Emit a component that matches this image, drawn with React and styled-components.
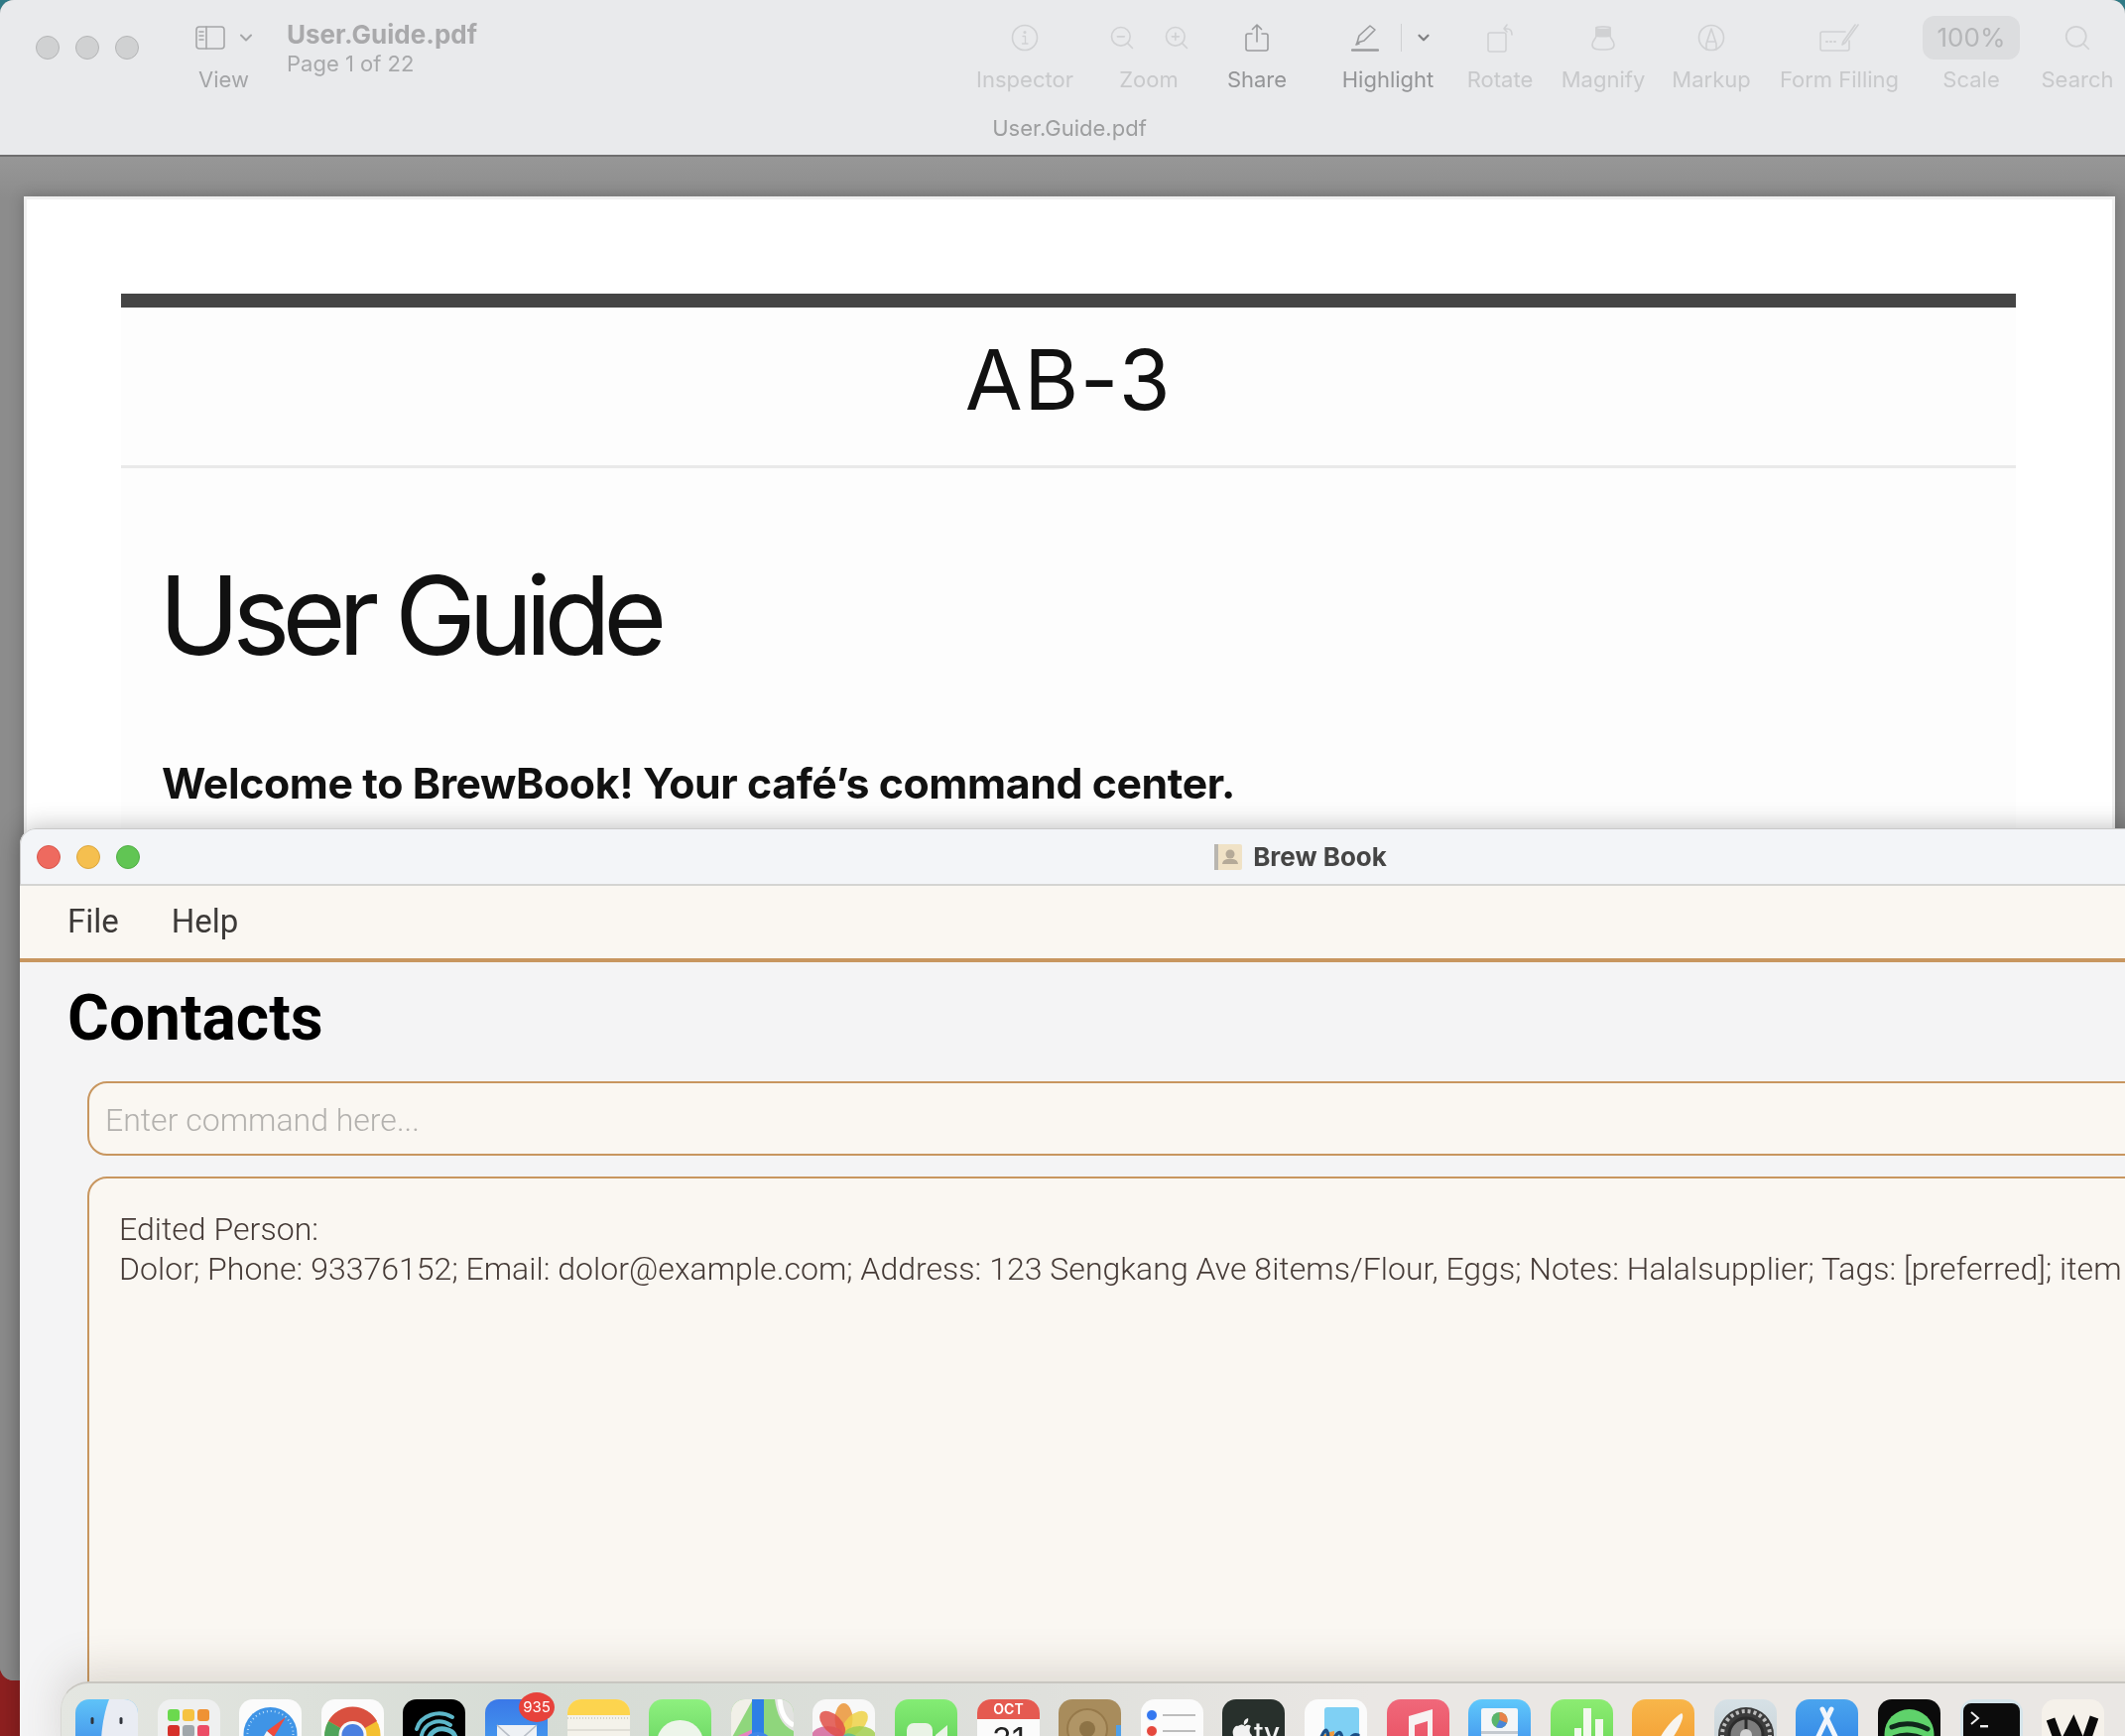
import React from 'react'
import styled, { createGlobalStyle } from 'styled-components'
import { ChevronDown, Search, ZoomIn, ZoomOut } from 'lucide-react'

const GlobalStyle = createGlobalStyle`
  html, body {
    margin: 0;
    padding: 0;
    width: 2142px;
    height: 1750px;
    overflow: hidden;
    background: #8f2020;
  }
  * { box-sizing: border-box; }
`

const Desktop = styled.div`
  position: relative;
  width: 2142px;
  height: 1750px;
  overflow: hidden;
  background: linear-gradient(180deg, #2f7a86 0 40%, #8f2020 90%);
  font-family: Inter, "Liberation Sans", sans-serif;
`

/* ---------- preview window ---------- */

const PreviewWindow = styled.div`
  display: flex;
  flex-direction: column;
  height: 1694px;
  background: #959595;
  border-radius: 14px;
  overflow: hidden;
`

const Toolbar = styled.div`
  flex: none;
  height: 158px;
  background: #e9eaec;
  border-bottom: 2px solid #6f6f6f;
`

const ToolRow = styled.div`
  display: flex;
  height: 116px;
  padding: 0 12px 0 36px;
`

const Lights = styled.div`
  display: flex;
  gap: 16px;
  padding-top: ${({ $top }) => $top || 0}px;
`

const Light = styled.span`
  display: block;
  width: 24px;
  height: 24px;
  border-radius: 50%;
  background: ${({ $color }) => $color};
  border: 1px solid ${({ $edge }) => $edge};
`

const ViewItem = styled.div`
  margin-left: 57px;
  width: 72px;
  display: flex;
  flex-direction: column;
  padding-top: 24px;
  height: 100%;
`

const ViewIcons = styled.div`
  display: flex;
  align-items: center;
  gap: 11px;
  height: 28px;
  color: #a5a6a8;
`

const ViewLabel = styled.div`
  margin-top: 14px;
  font-size: 22px;
  line-height: 28px;
  color: #a4a5a7;
  padding-left: 3px;
`

const DocInfo = styled.div`
  margin-left: 20px;
  padding-top: 19px;
`

const DocName = styled.div`
  font-size: 26px;
  line-height: 32px;
  font-weight: 700;
  color: #a9a9ab;
`

const DocPage = styled.div`
  font-size: 22px;
  line-height: 28px;
  color: #a8a9ab;
  margin-top: -1px;
`

const Tools = styled.div`
  display: flex;
  margin-left: auto;
  padding-top: 16px;
`

const Tool = styled.div`
  width: ${({ $w }) => $w}px;
  margin-left: ${({ $ml }) => $ml || 0}px;
  display: flex;
  flex-direction: column;
  align-items: center;
  color: ${({ $on }) => ($on ? '#9a9b9d' : '#d0d1d3')};
`

const ToolIcons = styled.div`
  height: 44px;
  display: flex;
  align-items: center;
  justify-content: center;
  gap: ${({ $gap }) => $gap || 0}px;
  padding-left: ${({ $pad }) => $pad || 0}px;
`

const ToolLabel = styled.div`
  margin-top: 6px;
  font-size: 22px;
  line-height: 28px;
  white-space: nowrap;
  color: ${({ $on }) => ($on ? '#949597' : '#c8c9cb')};
`

const ScaleBox = styled.div`
  width: 98px;
  height: 44px;
  border-radius: 12px;
  background: #dcdddf;
  color: #b5b6b8;
  font-size: 26px;
  line-height: 44px;
  text-align: center;
`

const Divider = styled.span`
  display: block;
  width: 1px;
  height: 28px;
  background: #cfd0d2;
  margin: 0 13px 0 22px;
`

const Caption = styled.div`
  height: 26px;
  padding-left: 14px;
  text-align: center;
  font-size: 22px;
  line-height: 26px;
  color: #9d9e9f;
`

const Canvas = styled.div`
  flex: 1;
  min-height: 0;
  display: flex;
  padding: 40px 10px 0 24px;
  background: linear-gradient(180deg, #979797 0, #8c8c8c 42px, #8c8c8c 100%);
`

const Page = styled.div`
  flex: 1;
  background: #fff;
  border: 3px solid #f0f0f0;
  border-bottom: 0;
  padding: 95px 97px 0 95px;
  box-shadow: 0 0 14px rgba(0, 0, 0, 0.22);
`

const PageBody = styled.div`
  height: 100%;
  background: #fdfdfd;
  border-top: 14px solid #454545;
`

const Header = styled.div`
  height: 162px;
  border-bottom: 3px solid #e9e9e9;
  text-align: center;
  font-size: 84px;
  line-height: 146px;
  font-weight: 400;
  color: #111;
  letter-spacing: 1.5px;
`

const GuideTitle = styled.h1`
  margin: 83px 0 0 38px;
  font-size: 110px;
  line-height: 130px;
  font-weight: 400;
  letter-spacing: -7.7px;
  color: #111;
`

const Welcome = styled.p`
  margin: 80px 0 0 41px;
  font-size: 42.8px;
  line-height: 50px;
  font-weight: 700;
  color: #111;
  letter-spacing: -0.4px;
`

/* ---------- brew book window ---------- */

const BrewWindow = styled.div`
  position: absolute;
  left: 20px;
  top: 835px;
  width: 2582px;
  height: 1100px;
  background: #f4f4f5;
  border-radius: 16px 16px 0 0;
  box-shadow: 0 0 26px rgba(0, 0, 0, 0.28);
  font-family: Roboto, "Liberation Sans", sans-serif;
  overflow: hidden;
`

const TitleBar = styled.div`
  display: grid;
  grid-template-columns: 1fr auto 1fr;
  align-items: center;
  height: 58px;
  padding: 0 16px;
  background: #f3f5f8;
  border: 1px solid #c9c9c9;
  border-bottom: 2px solid #d4d4d2;
  border-radius: 16px 16px 0 0;
`

const TitleText = styled.div`
  display: flex;
  align-items: center;
  gap: 11px;
  font-family: Inter, "Liberation Sans", sans-serif;
  font-size: 26px;
  font-weight: 700;
  color: #454545;
`

const MenuBar = styled.div`
  display: flex;
  gap: 53px;
  height: 77px;
  padding: 12px 0 0 48px;
  background: #faf7f2;
  border-bottom: 4px solid #c8965f;
`

const MenuItem = styled.span`
  font-size: 33px;
  line-height: 48px;
  color: #3d3a38;
`

const SectionTitle = styled.h2`
  margin: 19px 0 0 48px;
  font-size: 64px;
  line-height: 76px;
  font-weight: 700;
  color: #000;
`

const CommandBox = styled.div`
  margin: 25px 0 0 68px;
  height: 75px;
  padding-left: 16px;
  background: #faf7f2;
  border: 2px solid #c8965f;
  border-radius: 20px;
  font-size: 32px;
  line-height: 75px;
  font-weight: 300;
  color: #b3b1ae;
`

const ResultBox = styled.div`
  margin: 21px 0 0 68px;
  height: 700px;
  padding: 31px 30px;
  background: #faf7f2;
  border: 2px solid #c8965f;
  border-radius: 20px;
  font-size: 32px;
  line-height: 40px;
  font-weight: 300;
  color: #453a36;
  letter-spacing: 0.03px;
`

const ResultLine = styled.div`
  white-space: nowrap;
`

/* ---------- dock ---------- */

const Dock = styled.div`
  position: absolute;
  left: 61px;
  top: 1695px;
  width: 2200px;
  height: 90px;
  display: flex;
  gap: 19.6px;
  padding: 16px 0 0 14px;
  background: linear-gradient(90deg, #e4e6e1 0, #d6dcd5 22%, #dfe0dc 45%, #eae7e4 60%, #eae7e4 100%);
  border-top: 2px solid #c8c6c0;
  border-left: 1px solid #d8d8d4;
  border-radius: 28px 0 0 0;
  box-shadow: 0 -14px 40px rgba(90, 80, 60, 0.17);
`

const DockIcon = styled.div`
  position: relative;
  flex: none;
  width: 63px;
  height: 63px;
`

const IconFace = styled.div`
  width: 63px;
  height: 63px;
  border-radius: 14px;
  overflow: hidden;
  background: ${({ $bg }) => $bg};

  svg {
    display: block;
  }
`

const Badge = styled.span`
  position: absolute;
  top: -7px;
  right: -7px;
  width: 36px;
  height: 30px;
  border-radius: 50%;
  background: #e7423b;
  color: #fff;
  font-size: 15px;
  line-height: 30px;
  text-align: center;
  font-family: Inter, "Liberation Sans", sans-serif;
`

const Svg = ({ children }) => (
  <svg width='63' height='63' viewBox='0 0 63 63'>
    {children}
  </svg>
)

const LineIcon = ({ w = 28, h = 28, box, children }) => (
  <svg
    width={w}
    height={h}
    viewBox={box || `0 0 ${w} ${h}`}
    fill='none'
    stroke='currentColor'
    strokeWidth='1.6'
    strokeLinecap='round'
    strokeLinejoin='round'
  >
    {children}
  </svg>
)

const launchpadDots = [
  [10, 10, '#6bd94e'],
  [25, 10, '#f6c241'],
  [40, 10, '#ef9234'],
  [10, 26, '#d6302a'],
  [25, 26, '#a0a6aa'],
  [40, 26, '#ec4d66'],
]

const dockApps = [
  {
    name: 'Finder',
    bg: 'linear-gradient(180deg,#5fc3f8,#3b84e6)',
    art: (
      <Svg>
        <path d='M34 0 H63 V63 H27 C24 45 27 18 34 0 Z' fill='#e9ecf3' />
        <rect x='15.5' y='18' width='3' height='7' rx='1.5' fill='#30343c' />
        <rect x='44.5' y='18' width='3' height='7' rx='1.5' fill='#30343c' />
      </Svg>
    ),
  },
  {
    name: 'Launchpad',
    bg: '#eff0f0',
    art: (
      <Svg>
        {launchpadDots.map(([x, y, c]) => (
          <rect key={c} x={x} y={y} width='12' height='12' rx='3' fill={c} />
        ))}
      </Svg>
    ),
  },
  {
    name: 'Safari',
    bg: '#fbfbfb',
    art: (
      <Svg>
        <circle cx='31.5' cy='35' r='27' fill='#3f94e6' />
        <circle cx='31.5' cy='35' r='23' fill='none' stroke='#bfe0fa' strokeWidth='2' strokeDasharray='1 3' />
        <path d='M47 18 L28 32 L35 38 Z' fill='#ef4a3c' />
        <path d='M16 52 L28 32 L35 38 Z' fill='#f4f4f4' />
      </Svg>
    ),
  },
  {
    name: 'Chrome',
    bg: '#fbfbfb',
    art: (
      <Svg>
        <circle cx='31.5' cy='36' r='28' fill='#f4c030' />
        <path d='M31.5 36 L7 22 A28 28 0 0 1 56 22 Z' fill='#d9503f' />
        <path d='M31.5 36 L7 22 A28 28 0 0 0 20 62 Z' fill='#4fa45b' />
        <circle cx='31.5' cy='36' r='14' fill='#f7f7f7' />
        <circle cx='31.5' cy='36' r='11' fill='#4a7fe0' />
      </Svg>
    ),
  },
  {
    name: 'Waves',
    bg: '#000',
    art: (
      <Svg>
        <g fill='none' stroke='#5db7c9' strokeLinecap='round'>
          <path d='M14 30 C18 16 36 10 50 18' strokeWidth='4' />
          <path d='M19 36 C22 24 36 18 48 26' strokeWidth='4' />
          <path d='M25 60 C20 44 28 28 42 30 C48 31 52 34 53 38' strokeWidth='5' />
          <path d='M36 58 C32 48 34 40 42 40' strokeWidth='5' />
        </g>
      </Svg>
    ),
  },
  {
    name: 'Mail',
    bg: 'linear-gradient(180deg,#3a78e8,#49a6f0)',
    badge: '935',
    art: (
      <Svg>
        <path d='M12 26 H52 V63 H12 Z' fill='#eef1f4' />
        <path d='M12 26 L32 44 L52 26' fill='none' stroke='#b8bec6' strokeWidth='1.6' />
      </Svg>
    ),
  },
  {
    name: 'Notes',
    bg: '#f4f2ea',
    art: (
      <Svg>
        <rect width='63' height='16' fill='#fdd44e' />
        <line x1='0' y1='19' x2='63' y2='19' stroke='#c9c7bd' strokeWidth='1.5' strokeDasharray='1 2' />
        <line x1='0' y1='31' x2='63' y2='31' stroke='#e0ded6' strokeWidth='2' />
        <line x1='0' y1='45' x2='63' y2='45' stroke='#e0ded6' strokeWidth='2' />
      </Svg>
    ),
  },
  {
    name: 'Messages',
    bg: 'linear-gradient(180deg,#8ef07f,#62d05c)',
    art: (
      <Svg>
        <ellipse cx='31.5' cy='42' rx='23' ry='21' fill='#edf5ea' />
      </Svg>
    ),
  },
  {
    name: 'Maps',
    bg: '#8fd67c',
    art: (
      <Svg>
        <path d='M0 0 H22 L0 40 Z' fill='#f1f0e8' />
        <path d='M44 0 H63 V32 C50 26 46 14 44 0 Z' fill='#e2e3e0' />
        <path d='M0 40 L22 30 L22 63 H0 Z' fill='#e583c0' />
        <rect x='21' y='0' width='12' height='63' fill='#2d7fe6' />
        <path d='M49 0 C50 14 54 22 63 26' stroke='#fff' strokeWidth='5' fill='none' />
        <circle cx='27' cy='48' r='15' fill='#3d86e8' />
        <path d='M27 36 L36 60 L27 55 L18 60 Z' fill='#fff' />
      </Svg>
    ),
  },
  {
    name: 'Photos',
    bg: '#f8f8f8',
    art: (
      <Svg>
        <g style={{ mixBlendMode: 'multiply' }} transform='translate(31.5 36)'>
          {['#f29a38', '#f6d84a', '#a8d552', '#62c49a', '#6a9fe0', '#9a78c8', '#d96aa0', '#e8524a'].map((c, i) => (
            <ellipse key={c} cx='0' cy='-16' rx='9' ry='16' fill={c} opacity='0.85' transform={`rotate(${i * 45})`} />
          ))}
        </g>
      </Svg>
    ),
  },
  {
    name: 'FaceTime',
    bg: 'linear-gradient(180deg,#84ec74,#5dcc55)',
    art: (
      <Svg>
        <rect x='12' y='24' width='26' height='28' rx='7' fill='#eaf3e6' />
        <path d='M41 36 L53 26 V52 L41 44 Z' fill='#eaf3e6' />
      </Svg>
    ),
  },
  {
    name: 'Calendar',
    bg: '#fbfbfb',
    art: (
      <Svg>
        <rect width='63' height='20' fill='#e55a50' />
        <text x='31.5' y='15' textAnchor='middle' fontSize='14' fontWeight='600' fill='#fff' fontFamily='Inter, sans-serif'>OCT</text>
        <text x='31.5' y='52' textAnchor='middle' fontSize='32' fill='#222' fontFamily='Inter, sans-serif'>31</text>
      </Svg>
    ),
  },
  {
    name: 'Contacts',
    bg: '#a88c5c',
    art: (
      <Svg>
        <rect x='58' y='26' width='5' height='30' fill='#4f9fe8' />
        <circle cx='29' cy='30' r='20' fill='#b09566' stroke='#96794a' strokeWidth='2' />
        <circle cx='29' cy='30' r='8' fill='#8d7346' />
      </Svg>
    ),
  },
  {
    name: 'Reminders',
    bg: '#fbfbfb',
    art: (
      <Svg>
        <circle cx='11' cy='16' r='5.5' fill='#3478f0' stroke='#fff' strokeWidth='1' />
        <circle cx='11' cy='32' r='5.5' fill='#e5483d' stroke='#fff' strokeWidth='1' />
        <rect x='22' y='15' width='33' height='2' fill='#bdbdbd' />
        <rect x='22' y='31' width='33' height='2' fill='#bdbdbd' />
      </Svg>
    ),
  },
  {
    name: 'TV',
    bg: '#28302c',
    art: (
      <Svg>
        <path d='M16 27 C19 25 21 25 23 27 C25 25 27 26 29 27 C27 30 27 34 30 36 C29 40 26 46 23 44 C21 43 20 43 18 44 C15 46 9 36 11 31 C12 28 14 26 16 27 Z M22 26 C21 22 23 20 26 19 C27 22 25 25 22 26 Z' fill='#f1f1f1' />
        <text x='32' y='44' fontSize='28' fontWeight='500' fill='#f1f1f1' fontFamily='Inter, sans-serif'>tv</text>
      </Svg>
    ),
  },
  {
    name: 'Freeform',
    bg: '#fbfbfb',
    art: (
      <Svg>
        <rect x='20' y='8' width='35' height='42' rx='3' fill='#7fd0f4' />
        <path d='M8 63 C8 44 16 34 30 32 V63 Z' fill='#f09a3e' />
        <path d='M12 52 C20 26 24 26 24 44 C24 54 32 30 36 34 C40 38 36 50 42 44 C46 40 48 34 54 36' fill='none' stroke='#1c4f86' strokeWidth='3.4' strokeLinecap='round' />
      </Svg>
    ),
  },
  {
    name: 'Music',
    bg: 'linear-gradient(180deg,#f0687a,#e84c5e)',
    art: (
      <Svg>
        <path d='M22 17 L46 10 V56 H41 V22 L28 26 V60 H22 Z' fill='#f7f2f2' />
      </Svg>
    ),
  },
  {
    name: 'Keynote',
    bg: 'linear-gradient(180deg,#5fc8fb,#3b86ea)',
    art: (
      <Svg>
        <rect x='13' y='9' width='37' height='29' rx='2' fill='#f4f6f8' />
        <rect x='13' y='32' width='37' height='3' fill='#c4c9cf' />
        <circle cx='31.5' cy='21' r='8' fill='#5ab56c' />
        <path d='M31.5 21 V13 A8 8 0 0 1 39 24 Z' fill='#e8824a' />
        <path d='M31.5 21 L39 24 A8 8 0 0 1 28 28 Z' fill='#4a86d8' />
        <rect x='30.5' y='38' width='2' height='25' fill='#f4f6f8' />
      </Svg>
    ),
  },
  {
    name: 'Numbers',
    bg: 'linear-gradient(180deg,#8cec72,#66d452)',
    art: (
      <Svg>
        <rect x='24' y='29' width='7' height='34' fill='#f2f8ee' />
        <rect x='33' y='9' width='8' height='54' fill='#f2f8ee' />
        <rect x='45' y='20' width='8' height='43' fill='#f2f8ee' />
      </Svg>
    ),
  },
  {
    name: 'Pages',
    bg: 'linear-gradient(180deg,#f8b64a,#f29a30)',
    art: (
      <Svg>
        <path d='M50 14 C54 16 48 30 36 46 L24 63 H18 C22 48 34 24 50 14 Z' fill='#f8f4ee' />
      </Svg>
    ),
  },
  {
    name: 'Settings',
    bg: 'linear-gradient(180deg,#d6e1e6,#c6ced2)',
    art: (
      <Svg>
        <circle cx='32' cy='36' r='28' fill='#3c3c3c' />
        <circle cx='32' cy='36' r='24' fill='none' stroke='#bdbdbd' strokeWidth='4' strokeDasharray='3 3' />
        <circle cx='32' cy='36' r='17' fill='#7d7d7d' stroke='#2c2c2c' strokeWidth='3' />
        <g stroke='#2c2c2c' strokeWidth='3'>
          <line x1='32' y1='36' x2='32' y2='20' />
          <line x1='32' y1='36' x2='17' y2='45' />
          <line x1='32' y1='36' x2='47' y2='45' />
        </g>
        <circle cx='32' cy='36' r='6' fill='#d0d0d0' />
      </Svg>
    ),
  },
  {
    name: 'App Store',
    bg: 'linear-gradient(180deg,#4aa4ee,#2d7fe4)',
    art: (
      <Svg>
        <g stroke='#f2f6fb' strokeWidth='5' strokeLinecap='round'>
          <line x1='27' y1='10' x2='46' y2='50' />
          <line x1='36' y1='10' x2='17' y2='50' />
          <line x1='9' y1='46' x2='54' y2='46' />
        </g>
      </Svg>
    ),
  },
  {
    name: 'Spotify',
    bg: '#0b0b0b',
    art: (
      <Svg>
        <circle cx='31.5' cy='35' r='25' fill='#5fd26b' />
        <g fill='none' stroke='#10261a' strokeLinecap='round'>
          <path d='M14 28 C26 23 38 24 50 30' strokeWidth='5' />
          <path d='M16 38 C26 34 38 35 47 40' strokeWidth='4' />
          <path d='M19 47 C27 44 36 45 43 49' strokeWidth='3' />
        </g>
      </Svg>
    ),
  },
  {
    name: 'Terminal',
    bg: '#d4e4ea',
    art: (
      <Svg>
        <rect x='3' y='4' width='57' height='59' rx='8' fill='#0c0c0c' />
        <path d='M11 13 L18 19 L11 25' fill='none' stroke='#eee' strokeWidth='2' />
        <rect x='20' y='26' width='8' height='2.4' fill='#eee' />
      </Svg>
    ),
  },
  {
    name: 'Writer',
    bg: '#f5f1ea',
    art: (
      <Svg>
        <path d='M9 20 L20 50 L32 26 L42 50 L53 18' fill='none' stroke='#0a0a0a' strokeWidth='9' />
      </Svg>
    ),
  },
]

const toolbarTools = [
  {
    label: 'Inspector',
    w: 100,
    icon: (
      <LineIcon>
        <circle cx='14' cy='14' r='12.5' />
        <circle cx='14' cy='8.5' r='0.8' />
        <path d='M12 12.5 H14.5 V20 M11.5 20 H17' strokeWidth='1.3' />
      </LineIcon>
    ),
  },
  {
    label: 'Zoom',
    w: 84,
    ml: 33,
    gap: 27,
    icon: (
      <>
        <ZoomOut size={28} strokeWidth={1.4} />
        <ZoomIn size={28} strokeWidth={1.4} />
      </>
    ),
  },
  {
    label: 'Share',
    w: 60,
    ml: 37,
    on: true,
    icon: (
      <LineIcon w={26} h={30}>
        <path d='M8 11 H4 A2 2 0 0 0 2 13 V26 A2 2 0 0 0 4 28 H22 A2 2 0 0 0 24 26 V13 A2 2 0 0 0 22 11 H18' />
        <path d='M13 19 V2 M8.5 6.5 L13 2 L17.5 6.5' />
      </LineIcon>
    ),
  },
  {
    label: 'Highlight',
    w: 94,
    ml: 55,
    on: true,
    pad: 8,
    highlight: true,
  },
  {
    label: 'Rotate',
    w: 68,
    ml: 32,
    icon: (
      <LineIcon w={28} h={30}>
        <rect x='2' y='10' width='18' height='19' rx='2' />
        <path d='M18 6 H21 C24 6 26 8 26 12 M21 2 L18 6 L21 9' />
      </LineIcon>
    ),
  },
  {
    label: 'Magnify',
    w: 84,
    ml: 28,
    icon: (
      <LineIcon w={26} h={26}>
        <path d='M6 3 C6 1.5 20 1.5 20 3 L20 11 C20 14 24 16 24 20 C24 24 21 25 13 25 C5 25 2 24 2 20 C2 16 6 14 6 11 Z' />
        <path d='M6 3 C6 5 20 5 20 3 V11 C20 12 6 12 6 11 Z' fill='currentColor' />
      </LineIcon>
    ),
  },
  {
    label: 'Markup',
    w: 80,
    ml: 27,
    icon: (
      <LineIcon>
        <circle cx='14' cy='14' r='12.5' />
        <path d='M14 5 L19 20 V26 M14 5 L9 20 V26 M9.5 18 H18.5' />
      </LineIcon>
    ),
  },
  {
    label: 'Form Filling',
    w: 122,
    ml: 28,
    icon: (
      <LineIcon w={40} h={28}>
        <path d='M26 8 H3 A2 2 0 0 0 1 10 V25 A2 2 0 0 0 3 27 H28 A2 2 0 0 0 30 25 V17' />
        <path d='M39 1 L26 19 L23 21 L24 18 L36 1' />
        <path d='M7 18 H8 M11 18 H12 M15 18 H16' strokeWidth='2' />
      </LineIcon>
    ),
  },
]

const App = () => (
  <Desktop>
    <GlobalStyle />
    <PreviewWindow>
      <Toolbar>
        <ToolRow>
          <Lights $top={36}>
            <Light $color='#d0d1d2' $edge='#b4b5b6' />
            <Light $color='#d0d1d2' $edge='#b4b5b6' />
            <Light $color='#d0d1d2' $edge='#b4b5b6' />
          </Lights>
          <ViewItem>
            <ViewIcons>
              <LineIcon w={30} h={24}>
                <rect x='1' y='1' width='28' height='22' rx='3' />
                <path d='M11 1 V23 M4 6 H8 M4 10 H8 M4 14 H8' />
              </LineIcon>
              <ChevronDown size={20} strokeWidth={2.4} />
            </ViewIcons>
            <ViewLabel>View</ViewLabel>
          </ViewItem>
          <DocInfo>
            <DocName>User.Guide.pdf</DocName>
            <DocPage>Page 1 of 22</DocPage>
          </DocInfo>
          <Tools>
            {toolbarTools.map((tool) => (
              <Tool key={tool.label} $w={tool.w} $ml={tool.ml} $on={tool.on}>
                <ToolIcons $gap={tool.gap} $pad={tool.pad}>
                  {tool.highlight ? (
                    <>
                      <LineIcon w={28} h={28}>
                        <path d='M6 19 L8 12 L19 2 L24 6 L13 17 Z M6 19 L5 21 L8 20' />
                        <path d='M1 26.5 H27' strokeWidth='2.4' />
                      </LineIcon>
                      <Divider />
                      <ChevronDown size={18} strokeWidth={3} color='#808183' />
                    </>
                  ) : (
                    tool.icon
                  )}
                </ToolIcons>
                <ToolLabel $on={tool.on}>{tool.label}</ToolLabel>
              </Tool>
            ))}
            <Tool $w={98} $ml={23}>
              <ScaleBox>100%</ScaleBox>
              <ToolLabel>Scale</ToolLabel>
            </Tool>
            <Tool $w={72} $ml={22}>
              <ToolIcons>
                <Search size={30} strokeWidth={1.4} />
              </ToolIcons>
              <ToolLabel>Search</ToolLabel>
            </Tool>
          </Tools>
        </ToolRow>
        <Caption>User.Guide.pdf</Caption>
      </Toolbar>
      <Canvas>
        <Page>
          <PageBody>
            <Header>AB-3</Header>
            <GuideTitle>User Guide</GuideTitle>
            <Welcome>Welcome to BrewBook! Your café’s command center.</Welcome>
          </PageBody>
        </Page>
      </Canvas>
    </PreviewWindow>

    <BrewWindow>
      <TitleBar>
        <Lights>
          <Light $color='#ee6a5f' $edge='#d9564c' />
          <Light $color='#f5bf4f' $edge='#dca63c' />
          <Light $color='#61c554' $edge='#4fae44' />
        </Lights>
        <TitleText>
          <svg width='28' height='26' viewBox='0 0 28 26'>
            <rect width='28' height='26' rx='2' fill='#f0e2c6' />
            <rect width='4' height='26' fill='#b9b6b0' />
            <circle cx='16' cy='10' r='4.5' fill='#b5aa98' />
            <path d='M8 20 C9 15 12 15 16 15 C20 15 23 15 24 20 Z' fill='#b5aa98' />
          </svg>
          Brew Book
        </TitleText>
      </TitleBar>
      <MenuBar>
        <MenuItem>File</MenuItem>
        <MenuItem>Help</MenuItem>
      </MenuBar>
      <SectionTitle>Contacts</SectionTitle>
      <CommandBox>Enter command here...</CommandBox>
      <ResultBox>
        <ResultLine>Edited Person:</ResultLine>
        <ResultLine>
          Dolor; Phone: 93376152; Email: dolor@example.com; Address: 123 Sengkang Ave 8items/Flour, Eggs; Notes: Halalsupplier; Tags: [preferred]; item
        </ResultLine>
      </ResultBox>
    </BrewWindow>

    <Dock>
      {dockApps.map((app) => (
        <DockIcon key={app.name}>
          <IconFace $bg={app.bg}>{app.art}</IconFace>
          {app.badge && <Badge>{app.badge}</Badge>}
        </DockIcon>
      ))}
    </Dock>
  </Desktop>
)

export default App
